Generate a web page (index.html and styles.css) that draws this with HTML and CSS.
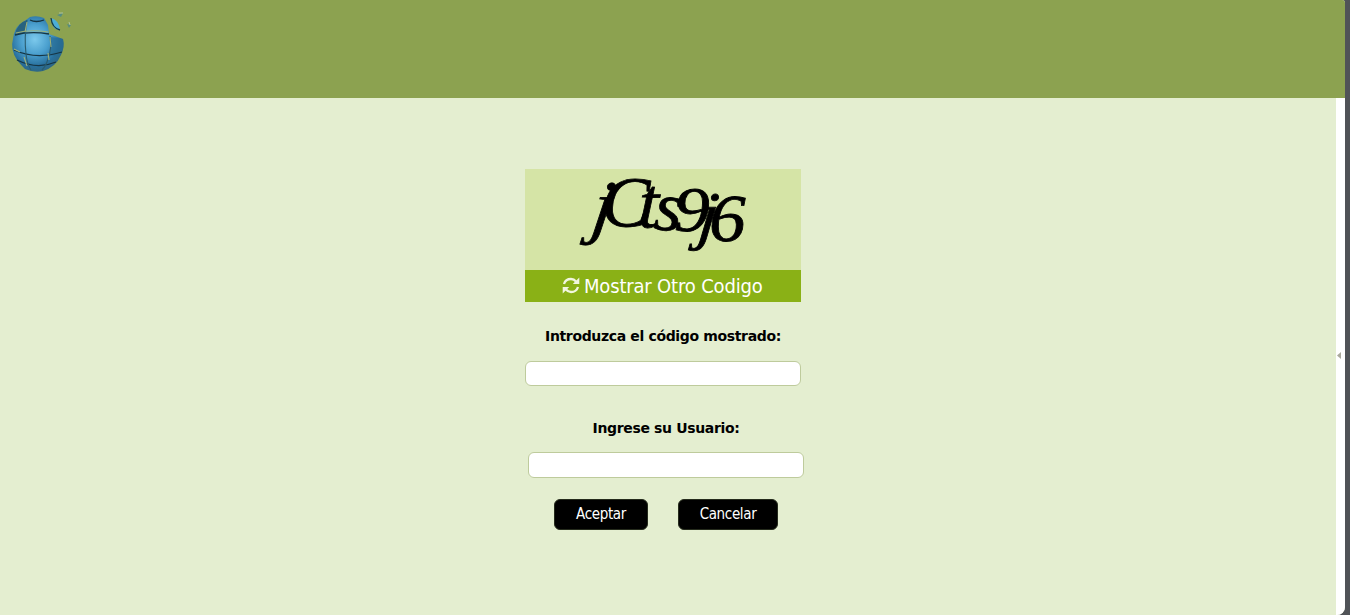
FILE: index.html
```html
<!DOCTYPE html>
<html lang="es">
<head>
<meta charset="utf-8">
<title>Ingreso</title>
<link rel="stylesheet" href="styles.css">
</head>
<body>
<div class="window">
  <header class="banner">
    <svg class="logo" width="76" height="76" viewBox="0 0 76 76">
      <defs>
        <radialGradient id="ball" cx="44%" cy="42%" r="60%">
          <stop offset="0" stop-color="#7cc9ec"/>
          <stop offset=".45" stop-color="#4a9fce"/>
          <stop offset=".8" stop-color="#286f9c"/>
          <stop offset="1" stop-color="#2f6680"/>
        </radialGradient>
      </defs>
      <path d="M30 17Q37 15 44 18L48 25L49 34L63 39Q65 47 61 55Q56 67 43 71Q34 73 25 69Q21 65 17 60Q10 49 13 39Q14 29 20 24Q26 20 30 17Z" fill="url(#ball)"/>
      <path d="M27 20Q17 23 15 35L25 33Z" fill="#27627f"/>
      <path d="M51 37L63 39Q65 49 59 57L50 55Z" fill="#266b94" opacity=".65"/>
      <path d="M30 20Q36 23 44 20M15 35Q30 31 49 34M14 50Q36 60 62 52M17 60Q37 70 56 62" fill="none" stroke="#163544" stroke-width="1.3"/>
      <path d="M27 20Q24 37 26 54Q27 64 31 70M50 36Q52 48 48 59Q46 66 42 70" fill="none" stroke="#2a5c6e" stroke-width="1.1"/>
      <path d="M16 33Q30 29 48 32M14 49L20 52M27 22L25 32M50 37L51 47M48 53L49 60M24 57L27 66" fill="none" stroke="#9db17b" stroke-width="1.1"/>
      <path d="M51 18Q59 20 60 30Q52 31 51 18Z" fill="#4caed8"/>
      <path d="M51 18Q52 28 60 30" fill="none" stroke="#173d47" stroke-width="1.3"/>
      <path d="M57 15L63 13L61 17ZM67 24L71 25L69 28Z" fill="#568c80"/>
      <path d="M59 13L63 13M69 22L70 25" stroke="#aec19c"/>
    </svg>
  </header>
  <div class="content">
    <main class="form">
      <div class="captcha">
        <svg class="code" width="275" height="101" viewBox="0 0 275 101">
          <text transform="translate(65 61) skewX(-8) scale(1.06 .99)" font-size="72">j</text>
          <text transform="translate(76 57) rotate(1) scale(1.01 1)" font-size="72">C</text>
          <text transform="translate(113 58) rotate(2)" font-size="72">t</text>
          <text transform="translate(128 60) rotate(5) scale(1.02 1)" font-size="70">s</text>
          <text transform="translate(149 62) scale(1.12 1)" font-size="64">9</text>
          <text transform="translate(172 67.500) skewX(-6) scale(1.06 1)" font-size="65">j</text>
          <text transform="translate(184 72) scale(1.08 1)" font-size="68">6</text>
        </svg>
        <a class="refresh">
          <svg class="refresh-icon" width="18" height="18" viewBox="0 0 18 18">
            <path d="M2 7Q3.500 2 9 2Q12 2 14 4.500M16 10Q14.500 15 9 15Q6 15 4 12.500" fill="none" stroke="#f1f6df" stroke-width="2.300"/>
            <path d="M17.300 .5V7.100H10.800ZM.7 16.500V9.900H7.200Z" fill="#f1f6df"/>
          </svg>
          <span class="refresh-text">Mostrar Otro Codigo</span>
        </a>
      </div>
      <label class="label label-code" for="codigo"><span>Introduzca el código mostrado:</span></label>
      <input class="field" id="codigo" type="text">
      <label class="label label-user" for="usuario"><span>Ingrese su Usuario:</span></label>
      <input class="field field-user" id="usuario" type="text">
      <div class="actions">
        <button class="button accept">Aceptar</button>
        <button class="button cancel">Cancelar</button>
      </div>
    </main>
    <aside class="splitter">
      <svg width="4" height="7" viewBox="0 0 4 7"><path d="M4 0V7L0 3.500Z" fill="#aaa99c"/></svg>
    </aside>
  </div>
</div>
</body>
</html>
```
FILE: styles.css
```css
* { box-sizing: border-box; }
body {
  margin: 0;
  height: 615px;
  overflow: hidden;
  background: #505357;
  font-family: "DejaVu Sans Condensed", "DejaVu Sans", sans-serif;
}
.window {
  display: flex;
  flex-direction: column;
  width: 1345px;
  height: 615px;
  overflow: hidden;
  border-radius: 0 3px 8px 0;
  background: #e4eed0;
}
.banner { flex: none; height: 98px; background: #8ca250; }
.logo { display: block; }
.content { display: flex; flex: 1; }
.form {
  display: flex;
  flex-direction: column;
  width: 276px;
  margin: 71px auto 0 525px;
}
.captcha { height: 133px; background: #d5e4a6; }
.code {
  display: block;
  overflow: visible;
  font-family: "Liberation Serif", serif;
  font-style: italic;
  stroke: #000;
  stroke-width: .8px;
}
.refresh {
  display: flex;
  align-items: center;
  height: 32px;
  padding-left: 37px;
  gap: 4px;
  background: #8ab116;
  color: #fff;
}
.refresh-icon { margin-bottom: 1px; }
.refresh-text { font-size: 20px; line-height: 32px; letter-spacing: -.17px; white-space: nowrap; }
.label {
  font-family: "DejaVu Sans", sans-serif;
  font-size: 14px;
  font-weight: bold;
  line-height: 20px;
  text-align: center;
  white-space: nowrap;
  letter-spacing: -.35px;
}
.label-code { margin: 24px 0 15px; }
.label-user { margin: 32px 0 14px; padding-left: 6px; }
.field {
  width: 276px;
  height: 25px;
  border: 1px solid #becb9c;
  border-radius: 6px;
  background: #fff;
}
.field-user { height: 26px; margin-left: 3px; }
.actions { display: flex; gap: 30px; margin: 21px 0 0 29px; }
.button {
  height: 31px;
  padding: 0 0 1px;
  border: 1px solid #252b1c;
  border-radius: 6px;
  background: #000;
  color: #fff;
  font: 15px "DejaVu Sans Condensed", "DejaVu Sans", sans-serif;
  letter-spacing: -.35px;
}
.accept { width: 94px; }
.cancel { width: 100px; }
.splitter {
  display: flex;
  align-items: center;
  width: 9px;
  padding: 0 0 2px 1px;
  background: #fff;
}
```
